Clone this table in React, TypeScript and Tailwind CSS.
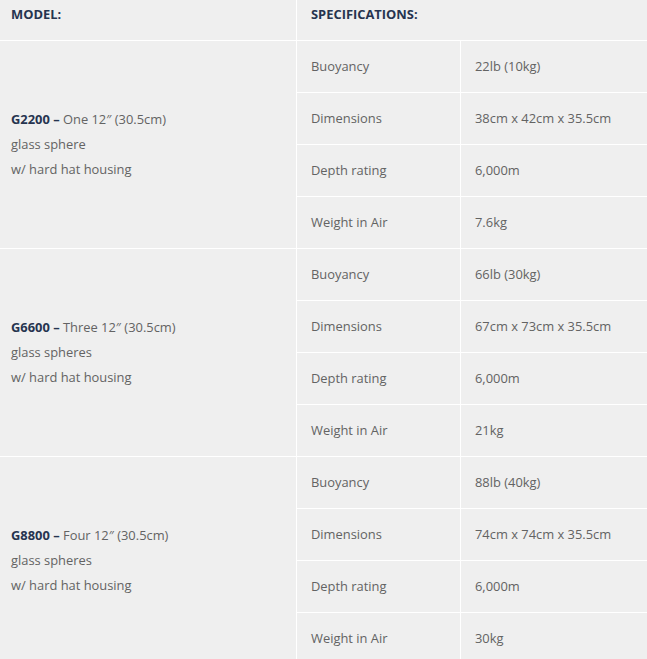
const models = [
  {
    code: 'G2200',
    lines: ['One 12″ (30.5cm)', 'glass sphere', 'w/ hard hat housing'],
    specs: [
      ['Buoyancy', '22lb (10kg)'],
      ['Dimensions', '38cm x 42cm x 35.5cm'],
      ['Depth rating', '6,000m'],
      ['Weight in Air', '7.6kg'],
    ],
  },
  {
    code: 'G6600',
    lines: ['Three 12″ (30.5cm)', 'glass spheres', 'w/ hard hat housing'],
    specs: [
      ['Buoyancy', '66lb (30kg)'],
      ['Dimensions', '67cm x 73cm x 35.5cm'],
      ['Depth rating', '6,000m'],
      ['Weight in Air', '21kg'],
    ],
  },
  {
    code: 'G8800',
    lines: ['Four 12″ (30.5cm)', 'glass spheres', 'w/ hard hat housing'],
    specs: [
      ['Buoyancy', '88lb (40kg)'],
      ['Dimensions', '74cm x 74cm x 35.5cm'],
      ['Depth rating', '6,000m'],
      ['Weight in Air', '30kg'],
    ],
  },
]

export default function App() {
  return (
    <div className="w-[647px] h-[659px] overflow-hidden bg-[#efefef] text-[12.9px] text-[#636363]" style={{ fontFamily: '"Open Sans", sans-serif' }}>
      {/* Header */}
      <div className="flex h-[41px] border-b border-white font-bold text-[#26344f]">
        <div className="w-[297px] pl-[11px] pt-[5px] border-r border-white">MODEL:</div>
        <div className="flex-1 pl-[14px] pt-[5px]">SPECIFICATIONS:</div>
      </div>

      {models.map((m) => (
        <div key={m.code} className="flex border-b border-white">
          <div className="w-[297px] shrink-0 flex flex-col justify-center pl-[11px] leading-[25px] border-r border-white">
            <div>
              <span className="font-bold text-[#26344f]">{m.code} –</span> {m.lines[0]}
            </div>
            <div>{m.lines[1]}</div>
            <div>{m.lines[2]}</div>
          </div>
          <div className="flex-1 flex flex-col">
            {m.specs.map(([label, value], i) => (
              <div key={label} className={i < 3 ? 'flex h-[52px] border-b border-white' : 'flex h-[51px]'}>
                <div className="w-[164px] flex items-center pl-[14px] border-r border-white">{label}</div>
                <div className="flex-1 flex items-center pl-[14px]">{value}</div>
              </div>
            ))}
          </div>
        </div>
      ))}
    </div>
  )
}
